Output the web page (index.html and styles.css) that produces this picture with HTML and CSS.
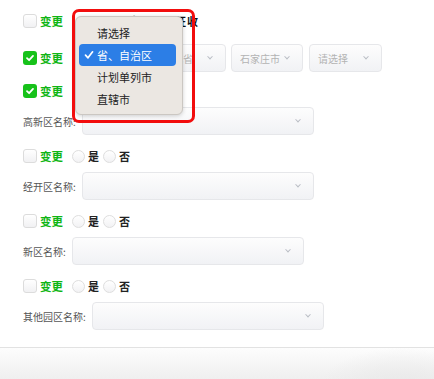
FILE: index.html
```html
<!DOCTYPE html>
<html lang="zh">
<head>
<meta charset="utf-8">
<link rel="stylesheet" href="styles.css">
</head>
<body>
<div class="page">
  <div class="form">
    <div class="check-row first">
      <span class="cb"></span><span class="chg">变更</span>
      <span class="title">是否涉及土地征收</span>
    </div>
    <div class="check-row selects">
      <span class="cb on"><svg viewBox="0 0 14 14" width="14" height="14"><path d="M4 7.2 L6.1 9.2 L10 4.9" fill="none" stroke="#fff" stroke-width="1.8" stroke-linecap="round" stroke-linejoin="round"/></svg></span><span class="chg">变更</span>
      <div class="sel w76"><span>省、自治区</span><i class="chev"></i></div>
      <div class="sel w72"><span>河北省</span><i class="chev"></i></div>
      <div class="sel w72"><span>石家庄市</span><i class="chev"></i></div>
      <div class="sel w73 last"><span>请选择</span><i class="chev"></i></div>
    </div>
    <div class="check-row r3">
      <span class="cb on"><svg viewBox="0 0 14 14" width="14" height="14"><path d="M4 7.2 L6.1 9.2 L10 4.9" fill="none" stroke="#fff" stroke-width="1.8" stroke-linecap="round" stroke-linejoin="round"/></svg></span><span class="chg">变更</span>
    </div>
    <div class="field"><label>高新区名称:</label><div class="sel big"><span></span><i class="chev"></i></div></div>

    <div class="check-row rep">
      <span class="cb"></span><span class="chg">变更</span>
      <span class="radio"></span><span class="opt">是</span>
      <span class="radio"></span><span class="opt">否</span>
    </div>
    <div class="field"><label>经开区名称:</label><div class="sel big"><span></span><i class="chev"></i></div></div>

    <div class="check-row rep">
      <span class="cb"></span><span class="chg">变更</span>
      <span class="radio"></span><span class="opt">是</span>
      <span class="radio"></span><span class="opt">否</span>
    </div>
    <div class="field"><label>新区名称:</label><div class="sel big"><span></span><i class="chev"></i></div></div>

    <div class="check-row rep">
      <span class="cb"></span><span class="chg">变更</span>
      <span class="radio"></span><span class="opt">是</span>
      <span class="radio"></span><span class="opt">否</span>
    </div>
    <div class="field"><label>其他园区名称:</label><div class="sel big"><span></span><i class="chev"></i></div></div>
  </div>
  <div class="footer"></div>

  <div class="popup">
    <div class="item">请选择</div>
    <div class="item active"><svg class="tick" viewBox="0 0 10 10" width="10" height="10"><path d="M1.5 5.2 L4 7.8 L8.6 1.8" fill="none" stroke="#fff" stroke-width="1.7" stroke-linecap="round" stroke-linejoin="round"/></svg>省、自治区</div>
    <div class="item">计划单列市</div>
    <div class="item">直辖市</div>
  </div>
  <div class="redbox"></div>
</div>
</body>
</html>
```

FILE: styles.css
```css
* { box-sizing: border-box; }
html, body { margin: 0; padding: 0; background: #fff; }
body {
  font-family: "Noto Sans CJK SC", "Noto Sans", sans-serif;
  width: 434px;
  height: 379px;
  overflow: hidden;
}
.page { position: relative; width: 434px; height: 379px; }
.form { padding: 11px 0 0 23px; }

.check-row {
  display: flex;
  align-items: center;
  height: 20px;
}
.check-row.first { margin-bottom: 13px; }
.check-row.selects { height: 28px; margin-bottom: 9px; }
.check-row.r3 { margin-bottom: 6px; }
.check-row.rep { margin-top: 11px; margin-bottom: 6px; }

.cb {
  width: 14px;
  height: 14px;
  border: 1px solid #dcdcdc;
  border-radius: 3px;
  background: linear-gradient(#fff, #f1f1f3);
  display: inline-flex;
  flex: none;
}
.cb.on {
  border: none;
  background: #17c21a;
}
.cb svg { display: block; }
.chg {
  color: #10b515;
  font-weight: 700;
  font-size: 11.5px;
  margin-left: 3px;
}
.title {
  margin-left: 40px;
  font-weight: 700;
  font-size: 11px;
  color: #111;
  letter-spacing: 1px;
}
.radio {
  width: 13px;
  height: 13px;
  border: 1px solid #dedede;
  border-radius: 50%;
  background: linear-gradient(#fff, #f2f2f4);
  margin-left: 9px;
  flex: none;
}
.radio + .opt { margin-left: 3px; }
.opt + .radio { margin-left: 4px; }
.opt {
  font-size: 11px;
  font-weight: 700;
  color: #222;
}

.sel {
  height: 28px;
  border: 1px solid #e6e7ea;
  border-radius: 4px;
  background: linear-gradient(#fdfdfd, #f1f2f5);
  display: flex;
  align-items: center;
  justify-content: space-between;
  padding: 0 13px 0 8px;
  font-size: 10px;
  color: #b3b3b3;
  flex: none;
  white-space: nowrap;
}
.w76 { width: 76px; margin-left: 10px; }
.w72 { width: 72px; margin-left: 5px; }
.w73 { width: 73px; }
.last { margin-left: 6px; }
.chev {
  width: 4px;
  height: 4px;
  border-right: 1px solid #b9bcc4;
  border-bottom: 1px solid #b9bcc4;
  transform: rotate(45deg) translate(-1px, -1px);
  display: block;
  flex: none;
}
.big { width: 232px; }

.field {
  display: flex;
  align-items: center;
  height: 28px;
}
.field label {
  font-size: 10px;
  color: #555;
  margin-right: 6px;
  white-space: nowrap;
}

.footer {
  margin-top: 17px;
  height: 32px;
  border-top: 1px solid #e2e2e2;
  background: radial-gradient(ellipse 80px 40px at 400px 40px, #e9e9e9, rgba(233,233,233,0)), linear-gradient(#fdfdfd, #efefef);
}

.popup {
  position: absolute;
  left: 75px;
  top: 16px;
  width: 108px;
  height: 99px;
  padding: 5px 6px 5px 3px;
  background: #ebe7e2;
  border: 1px solid #cbc7c2;
  border-radius: 6px;
  box-shadow: 0 1px 4px rgba(0,0,0,0.18);
  font-size: 11px;
  color: #222;
}
.item {
  height: 22px;
  line-height: 22px;
  padding-left: 18px;
  border-radius: 4px;
  position: relative;
}
.item.active {
  background: #2c7ee6;
  color: #fff;
}
.tick {
  position: absolute;
  left: 5px;
  top: 6px;
}
.redbox {
  position: absolute;
  left: 72px;
  top: 9px;
  width: 123px;
  height: 114px;
  border: 3px solid #f20d0d;
  border-radius: 7px;
}
```
